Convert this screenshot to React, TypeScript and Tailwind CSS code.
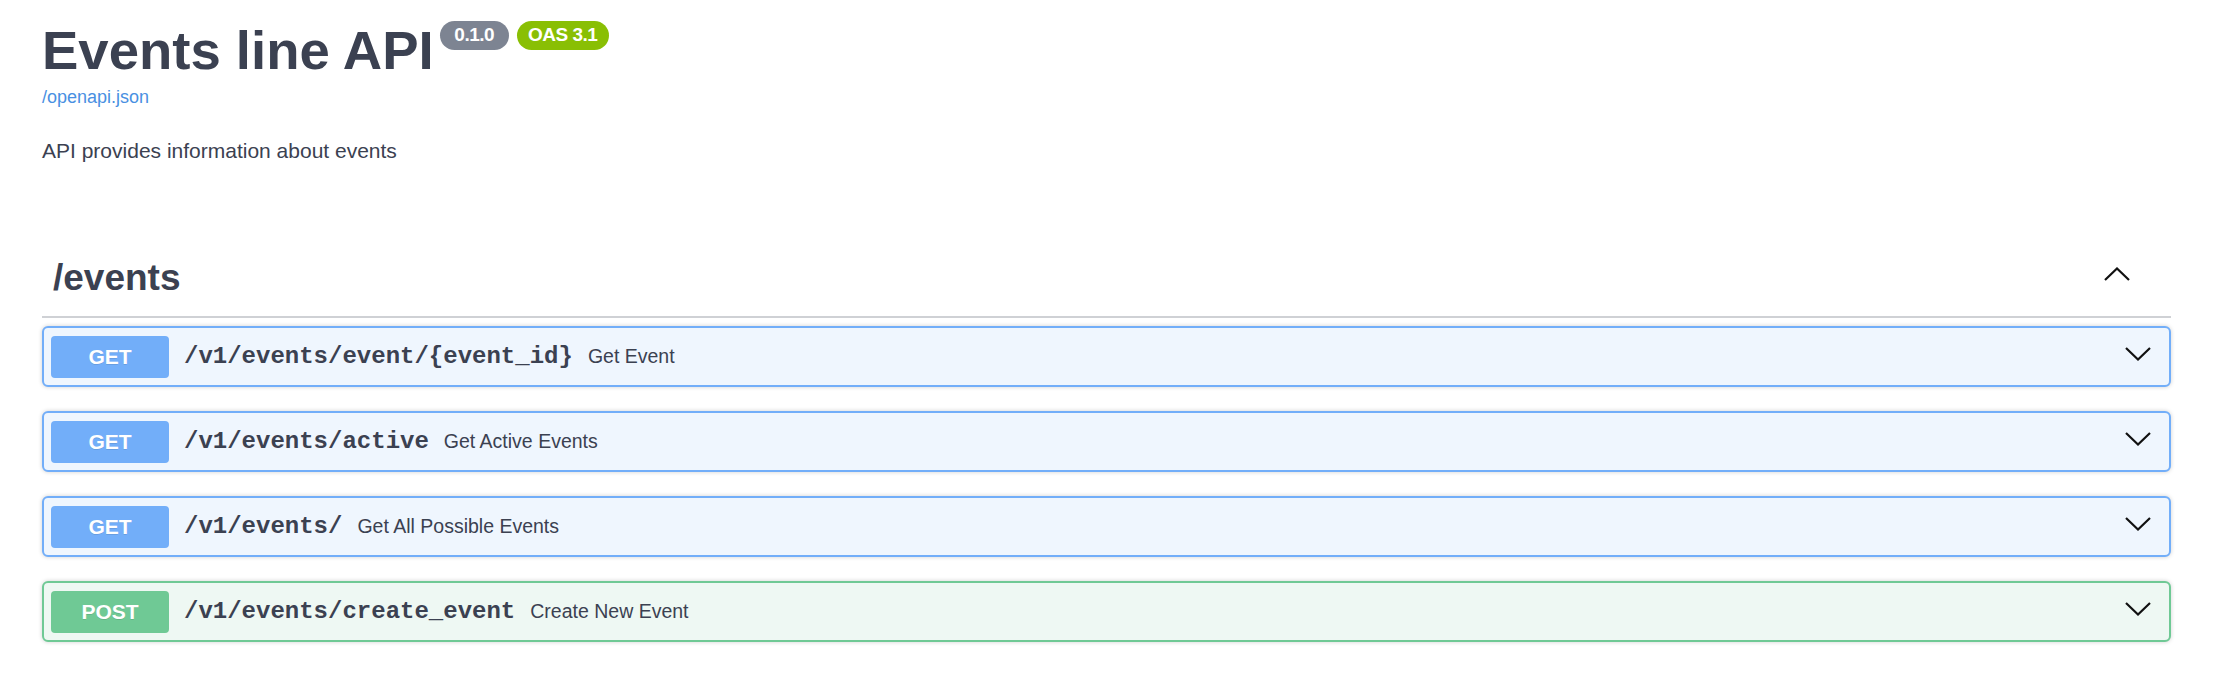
type Method = 'GET' | 'POST'

type Operation = {
  method: Method
  path: string
  summary: string
}

const operations: Operation[] = [
  { method: 'GET', path: '/v1/events/event/{event_id}', summary: 'Get Event' },
  { method: 'GET', path: '/v1/events/active', summary: 'Get Active Events' },
  { method: 'GET', path: '/v1/events/', summary: 'Get All Possible Events' },
  { method: 'POST', path: '/v1/events/create_event', summary: 'Create New Event' },
]

function blockClasses(method: Method) {
  if (method === 'POST') return 'border-[#6fc995] bg-[#eef8f3]'
  return 'border-[#72aef9] bg-[#eff6fe]'
}

function badgeClasses(method: Method) {
  if (method === 'POST') return 'bg-[#6fc995]'
  return 'bg-[#72aef9]'
}

function Chevron({ up = false }: { up?: boolean }) {
  return (
    <svg width="26" height="14" viewBox="0 0 26 14" className="shrink-0" aria-hidden="true">
      <path
        d={up ? 'M1 13 L13 1.5 L25 13' : 'M1 1 L13 12.5 L25 1'}
        fill="none"
        stroke="#111"
        strokeWidth="2.2"
      />
    </svg>
  )
}

function OperationRow({ op }: { op: Operation }) {
  return (
    <div
      className={`flex h-[61px] items-center rounded-[6px] border-2 pl-[7px] pr-[18px] shadow-[0_0_4px_rgba(0,0,0,0.19)] ${blockClasses(op.method)}`}
    >
      <span
        className={`flex h-[42px] w-[118px] shrink-0 items-center justify-center rounded-[4px] text-[21px] font-bold text-white [text-shadow:0_1px_0_rgba(0,0,0,0.1)] ${badgeClasses(op.method)}`}
      >
        {op.method}
      </span>
      <span className="px-[15px] font-['Liberation_Mono','Courier_New',monospace] text-[24px] font-bold text-[#3b4151]">
        {op.path}
      </span>
      <span className="text-[19.5px] text-[#3b4151]">{op.summary}</span>
      <div className="ml-auto mb-[6px]">
        <Chevron />
      </div>
    </div>
  )
}

export default function App() {
  return (
    <div className="min-h-[678px] bg-white pl-[42px] pr-[43px] pt-[21px] font-['Liberation_Sans',Arial,sans-serif] text-[#3b4151]">
      <div className="flex items-start">
        <h1 className="h-[60px] text-[54.5px] font-bold leading-[60px]">Events line API</h1>
        <span className="ml-[6px] flex h-[29px] w-[69px] items-center justify-center rounded-full bg-[#7d8492] text-[19px] font-bold tracking-[-0.5px] text-white">
          0.1.0
        </span>
        <span className="ml-[8px] flex h-[29px] w-[92px] items-center justify-center rounded-full bg-[#89bf04] text-[19px] font-bold tracking-[-0.5px] text-white">
          OAS 3.1
        </span>
      </div>

      <div className="mt-[4px] h-[24px] text-[18px] leading-[24px]">
        <a className="text-[#4990e2]">/openapi.json</a>
      </div>

      <p className="mt-[28px] h-[28px] text-[21px] leading-[28px]">API provides information about events</p>

      <div className="mt-[91px] flex items-start justify-between pb-[16px]">
        <h3 className="h-[44px] pl-[11px] text-[37px] font-bold leading-[44px]">/events</h3>
        <div className="mr-[41px] mt-[11px]">
          <Chevron up />
        </div>
      </div>
      <div className="h-[2px] bg-[#cfd1d5]" />

      <div className="mt-[8px] flex flex-col gap-[24px]">
        {operations.map((op) => (
          <OperationRow key={op.path} op={op} />
        ))}
      </div>
    </div>
  )
}
